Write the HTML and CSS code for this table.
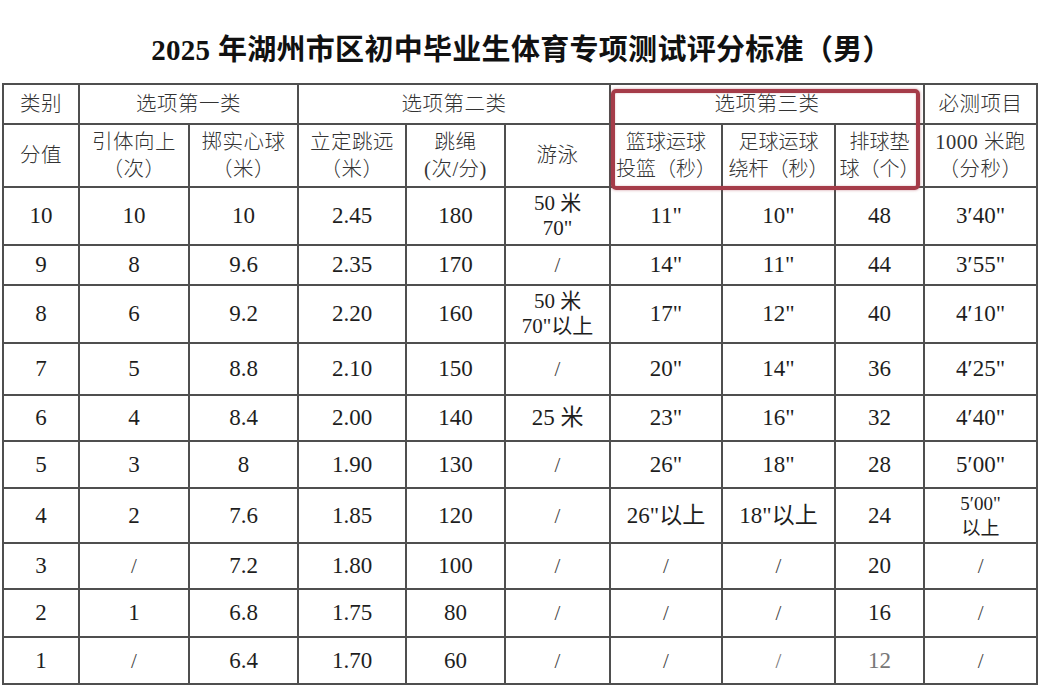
FILE: index.html
```html
<!DOCTYPE html>
<html lang="zh-CN">
<head>
<meta charset="utf-8">
<title>2025年湖州市区初中毕业生体育专项测试评分标准（男）</title>
<link rel="stylesheet" href="styles.css">
</head>
<body>
<div class="page">
  <h1 class="title">2025 年湖州市区初中毕业生体育专项测试评分标准（男）</h1>
  <div class="sheet">
    <table class="grid">
      <colgroup>
        <col class="c76"><col class="c110"><col class="c109"><col class="c108"><col class="c99"><col class="c105"><col class="c112"><col class="c113"><col class="c89"><col class="c113">
      </colgroup>
      <tr class="h40">
        <td class="zh">类别</td>
        <td class="zh" colspan="2">选项第一类</td>
        <td class="zh" colspan="3">选项第二类</td>
        <td class="zh" colspan="3">选项第三类</td>
        <td class="zh">必测项目</td>
      </tr>
      <tr class="h63">
        <td class="zh">分值</td>
        <td class="zh">引体向上<br>（次）</td>
        <td class="zh">掷实心球<br>（米）</td>
        <td class="zh">立定跳远<br>（米）</td>
        <td class="zh">跳绳<br>(次/分)</td>
        <td class="zh">游泳</td>
        <td class="zh tight">篮球运球<br>投篮（秒）</td>
        <td class="zh tight">足球运球<br>绕杆（秒）</td>
        <td class="zh tight">排球垫<br>球（个）</td>
        <td class="zh">1000 米跑<br>（分秒）</td>
      </tr>
      <tr class="h58">
        <td>10</td><td>10</td><td>10</td><td>2.45</td><td>180</td><td class="swim">50 米<br>70"</td><td>11"</td><td>10"</td><td>48</td><td>3′40"</td>
      </tr>
      <tr class="h40">
        <td>9</td><td>8</td><td>9.6</td><td>2.35</td><td>170</td><td class="slash">/</td><td>14"</td><td>11"</td><td>44</td><td>3′55"</td>
      </tr>
      <tr class="h58">
        <td>8</td><td>6</td><td>9.2</td><td>2.20</td><td>160</td><td class="swim">50 米<br>70"以上</td><td>17"</td><td>12"</td><td>40</td><td>4′10"</td>
      </tr>
      <tr class="h52">
        <td>7</td><td>5</td><td>8.8</td><td>2.10</td><td>150</td><td class="slash">/</td><td>20"</td><td>14"</td><td>36</td><td>4′25"</td>
      </tr>
      <tr class="h46">
        <td>6</td><td>4</td><td>8.4</td><td>2.00</td><td>140</td><td>25 米</td><td>23"</td><td>16"</td><td>32</td><td>4′40"</td>
      </tr>
      <tr class="h47">
        <td>5</td><td>3</td><td>8</td><td>1.90</td><td>130</td><td class="slash">/</td><td>26"</td><td>18"</td><td>28</td><td>5′00"</td>
      </tr>
      <tr class="h55">
        <td>4</td><td>2</td><td>7.6</td><td>1.85</td><td>120</td><td class="slash">/</td><td>26"以上</td><td>18"以上</td><td>24</td><td class="small">5′00"<br>以上</td>
      </tr>
      <tr class="h46">
        <td>3</td><td class="slash">/</td><td>7.2</td><td>1.80</td><td>100</td><td class="slash">/</td><td class="slash">/</td><td class="slash">/</td><td>20</td><td class="slash">/</td>
      </tr>
      <tr class="h48">
        <td>2</td><td>1</td><td>6.8</td><td>1.75</td><td>80</td><td class="slash">/</td><td class="slash">/</td><td class="slash">/</td><td>16</td><td class="slash">/</td>
      </tr>
      <tr class="h47">
        <td>1</td><td class="slash">/</td><td>6.4</td><td>1.70</td><td>60</td><td class="slash">/</td><td class="slash">/</td><td class="slash faded">/</td><td class="faded">12</td><td class="slash">/</td>
      </tr>
    </table>
    <div class="highlight"></div>
  </div>
</div>
</body>
</html>
```
FILE: styles.css
```css
* { box-sizing: border-box; }
html, body { margin: 0; padding: 0; background: #ffffff; }
body {
  width: 1039px;
  height: 685px;
  overflow: hidden;
  font-family: "Liberation Serif", "Noto Sans CJK SC", serif;
  color: #1c1c1c;
}
.page { width: 1039px; }
.title {
  margin: 0;
  height: 83px;
  padding-top: 30px;
  padding-left: 4px;
  text-align: center;
  font-size: 29px;
  line-height: 40px;
  font-weight: 700;
  color: #111;
  font-family: "Liberation Serif", "Noto Sans CJK SC", serif;
  letter-spacing: 0.3px;
}
.sheet {
  position: relative;
  padding-left: 2px;
}
.grid {
  border-collapse: collapse;
  table-layout: fixed;
  width: 1036px;
}
.c76 { width: 76px; }
.c110 { width: 110px; }
.c109 { width: 109px; }
.c108 { width: 108px; }
.c99 { width: 99px; }
.c105 { width: 105px; }
.c112 { width: 112px; }
.c113 { width: 113px; }
.c89 { width: 89px; }
.grid td {
  border: 2px solid #4f4f4f;
  text-align: center;
  vertical-align: middle;
  padding: 0;
  font-size: 23px;
  line-height: 26px;
  color: #1e1e1e;
  white-space: nowrap;
}
.grid td.zh {
  font-size: 20.5px;
  line-height: 27px;
  color: #333;
  font-weight: 300;
  letter-spacing: 0.5px;
}
.grid td.tight { letter-spacing: 0; font-size: 20px; }
.grid td.swim { font-size: 21px; line-height: 25px; }
.grid td.small { font-size: 19px; line-height: 25px; }
.grid td.slash { color: #444; font-size: 21px; }
.grid td.faded { color: #777; }
.h40 { height: 40px; }
.h46 { height: 46px; }
.h47 { height: 47px; }
.h48 { height: 48px; }
.h52 { height: 52px; }
.h55 { height: 55px; }
.h58 { height: 58px; }
.h63 { height: 63px; }
.highlight {
  position: absolute;
  left: 611px;
  top: 6px;
  width: 309px;
  height: 101px;
  border: 4px solid #a53c49;
  border-radius: 5px;
  box-shadow: 0 0 3px rgba(165, 60, 73, 0.55), inset 0 0 2px rgba(165, 60, 73, 0.4);
  pointer-events: none;
}
```
